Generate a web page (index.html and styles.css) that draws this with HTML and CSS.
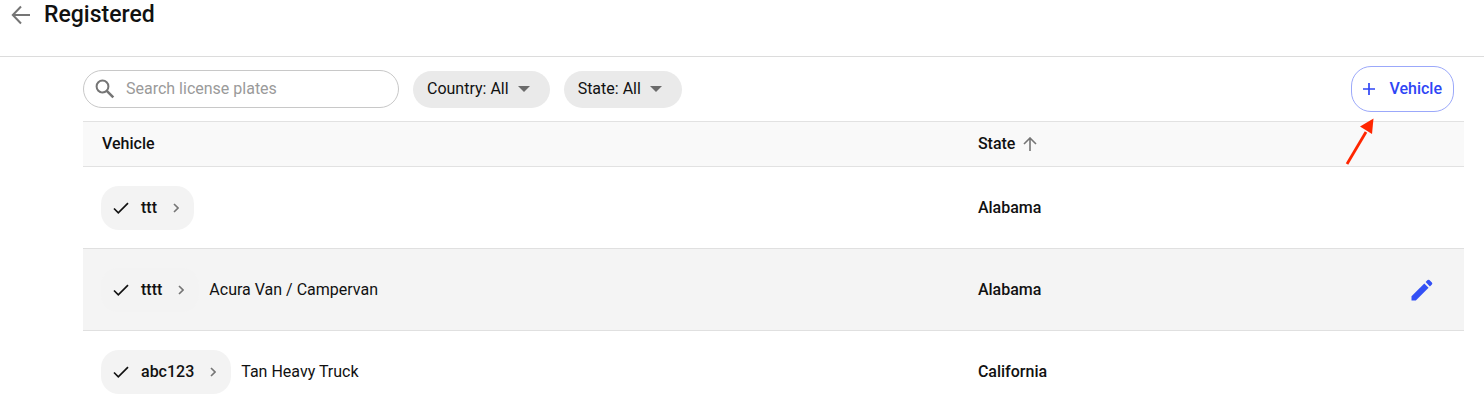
FILE: index.html
```html
<!DOCTYPE html>
<html lang="en">
<head>
    <meta charset="UTF-8">
    <meta name="viewport" content="width=device-width, initial-scale=1.0">
    <title>Registered Vehicles</title>
    <link rel="stylesheet" href="styles.css">
</head>
<body>
    <header class="page-header">
        <button class="icon-button" type="button" aria-label="Back">
            <svg width="20" height="20" viewBox="0 0 20 20" fill="none" stroke="#757575" stroke-width="2"><path d="M19 10H2M10 1.500L1.800 10L10 18.500"/></svg>
        </button>
        <h1>Registered</h1>
    </header>

    <main class="content">
        <div class="toolbar">
            <label class="search">
                <svg width="20" height="20" viewBox="0 0 20 20" fill="none" stroke="#757575" stroke-width="2"><circle cx="7.500" cy="7.500" r="5.900"/><path d="M11.800 11.800L18.300 18.300" stroke-width="2.600"/></svg>
                <input type="text" placeholder="Search license plates" aria-label="Search license plates">
            </label>
            <button class="filter" type="button">Country: All
                <svg width="12" height="6" viewBox="0 0 12 6"><path d="M0 0H12L6 6Z" fill="#6b6b6b"/></svg>
            </button>
            <button class="filter" type="button">State: All
                <svg width="12" height="6" viewBox="0 0 12 6"><path d="M0 0H12L6 6Z" fill="#6b6b6b"/></svg>
            </button>
            <div class="add-wrap">
                <button class="add-button" type="button">
                    <svg width="12" height="12" viewBox="0 0 12 12" stroke="#2f46f5" stroke-width="1.700"><path d="M6 0V12M0 6H12"/></svg>
                    Vehicle
                </button>
                <svg class="pointer" width="32" height="48" viewBox="0 0 32 48"><path d="M3 46L22 14" stroke="#ff2600" stroke-width="2.800"/><path d="M29.500 0.500L16 8.500L28 16Z" fill="#ff2600"/></svg>
            </div>
        </div>

        <table class="vehicles">
            <thead>
                <tr>
                    <th class="col-vehicle">Vehicle</th>
                    <th class="col-state">
                        <span class="sort">State
                            <svg width="14" height="14" viewBox="0 0 14 14" fill="none" stroke="#757575" stroke-width="1.600"><path d="M7 14V1M1 7L7 1L13 7"/></svg>
                        </span>
                    </th>
                    <th class="col-action"></th>
                </tr>
            </thead>
            <tbody>
                <tr>
                    <td>
                        <div class="vehicle">
                            <button class="chip" type="button">
                                <svg width="16" height="12" viewBox="0 0 16 12" fill="none" stroke="#111" stroke-width="1.700"><path d="M1 6.500L5.300 10.800L15 1.200"/></svg>
                                <span>ttt</span>
                                <svg class="chevron" width="6" height="10" viewBox="0 0 6 10" fill="none" stroke="#757575" stroke-width="1.600"><path d="M1 1L5 5L1 9"/></svg>
                            </button>
                        </div>
                    </td>
                    <td class="state">Alabama</td>
                    <td></td>
                </tr>
                <tr class="active">
                    <td>
                        <div class="vehicle">
                            <button class="chip" type="button">
                                <svg width="16" height="12" viewBox="0 0 16 12" fill="none" stroke="#111" stroke-width="1.700"><path d="M1 6.500L5.300 10.800L15 1.200"/></svg>
                                <span>tttt</span>
                                <svg class="chevron" width="6" height="10" viewBox="0 0 6 10" fill="none" stroke="#757575" stroke-width="1.600"><path d="M1 1L5 5L1 9"/></svg>
                            </button>
                            <span>Acura Van / Campervan</span>
                        </div>
                    </td>
                    <td class="state">Alabama</td>
                    <td class="action">
                        <button class="icon-button" type="button" aria-label="Edit vehicle">
                            <svg width="22" height="22" viewBox="0 0 22 22" fill="#3350f5"><path d="M0.500 17.200L13.300 4.400L17.600 8.700L4.800 21.500H0.500Z"/><path d="M14.600 3.100L16.600 1.100Q17.500 0.200 18.400 1.100L20.900 3.600Q21.800 4.500 20.900 5.400L18.900 7.400Z"/></svg>
                        </button>
                    </td>
                </tr>
                <tr>
                    <td>
                        <div class="vehicle">
                            <button class="chip" type="button">
                                <svg width="16" height="12" viewBox="0 0 16 12" fill="none" stroke="#111" stroke-width="1.700"><path d="M1 6.500L5.300 10.800L15 1.200"/></svg>
                                <span>abc123</span>
                                <svg class="chevron" width="6" height="10" viewBox="0 0 6 10" fill="none" stroke="#757575" stroke-width="1.600"><path d="M1 1L5 5L1 9"/></svg>
                            </button>
                            <span>Tan Heavy Truck</span>
                        </div>
                    </td>
                    <td class="state">California</td>
                    <td></td>
                </tr>
            </tbody>
        </table>
    </main>
</body>
</html>
```
FILE: styles.css
```css
* {
    box-sizing: border-box;
}
html {
    scrollbar-width: none;
}
body {
    margin: 0;
    font-family: Roboto, sans-serif;
    font-size: 16px;
    line-height: 20px;
    color: #111;
    background: #fff;
}
button {
    font: inherit;
    color: inherit;
    border: none;
    cursor: pointer;
}
svg {
    display: block;
    flex-shrink: 0;
}
.page-header {
    display: flex;
    align-items: center;
    gap: 13px;
    padding: 0 11px 26px;
    border-bottom: 1px solid #dcdcdc;
}
.page-header h1 {
    margin: 0;
    font-size: 23px;
    line-height: 30px;
    font-weight: 500;
}
.icon-button {
    padding: 0;
    background: none;
}
.content {
    padding: 9px 20px 0 83px;
}
.toolbar {
    display: flex;
    align-items: center;
    gap: 14px;
    margin-bottom: 9px;
}
.search {
    display: flex;
    align-items: center;
    gap: 11px;
    width: 316px;
    height: 38px;
    padding: 0 11px;
    border: 1px solid #c8c8c8;
    border-radius: 19px;
}
.search input {
    flex: 1;
    min-width: 0;
    padding: 0;
    border: none;
    outline: none;
    background: none;
    font: inherit;
}
.search input::placeholder {
    color: #9a9a9a;
}
.filter {
    display: flex;
    align-items: center;
    gap: 9px;
    height: 37px;
    padding: 0 20px 0 14px;
    border-radius: 19px;
    background: #eaeaea;
}
.add-wrap {
    position: relative;
    margin-left: auto;
    margin-right: 10px;
}
.add-button {
    display: flex;
    align-items: center;
    gap: 14px;
    height: 46px;
    padding: 0 11px;
    border: 1px solid #9ba8fa;
    border-radius: 20px;
    background: #fff;
    color: #2f46f5;
    font-weight: 500;
}
.pointer {
    position: absolute;
    top: 52px;
    right: 78px;
}
.vehicles {
    width: 100%;
    border-collapse: separate;
    border-spacing: 0;
    table-layout: fixed;
}
.vehicles th {
    height: 46px;
    padding: 0;
    border-top: 1px solid #e2e2e2;
    border-bottom: 1px solid #e2e2e2;
    background: #f9f9f9;
    font-weight: 500;
    text-align: left;
}
.vehicles .col-vehicle {
    width: 64.8%;
    padding-left: 19px;
}
.vehicles .col-action {
    width: 80px;
}
.sort {
    display: flex;
    align-items: center;
    gap: 8px;
}
.vehicles td {
    height: 82px;
    padding: 0;
    border-bottom: 1px solid #e0e0e0;
}
.vehicles td:first-child {
    padding-left: 18px;
}
.active td {
    background: #f4f4f4;
}
.vehicle {
    display: flex;
    align-items: center;
    gap: 10px;
}
.chip {
    display: flex;
    align-items: center;
    gap: 12px;
    height: 44px;
    padding: 0 15px 0 12px;
    border-radius: 18px;
    background: #f3f3f3;
    font-weight: 500;
}
.chevron {
    margin-left: 4px;
}
.state {
    font-weight: 500;
}
.action .icon-button {
    display: block;
    margin-left: auto;
    margin-right: 31px;
}
```
